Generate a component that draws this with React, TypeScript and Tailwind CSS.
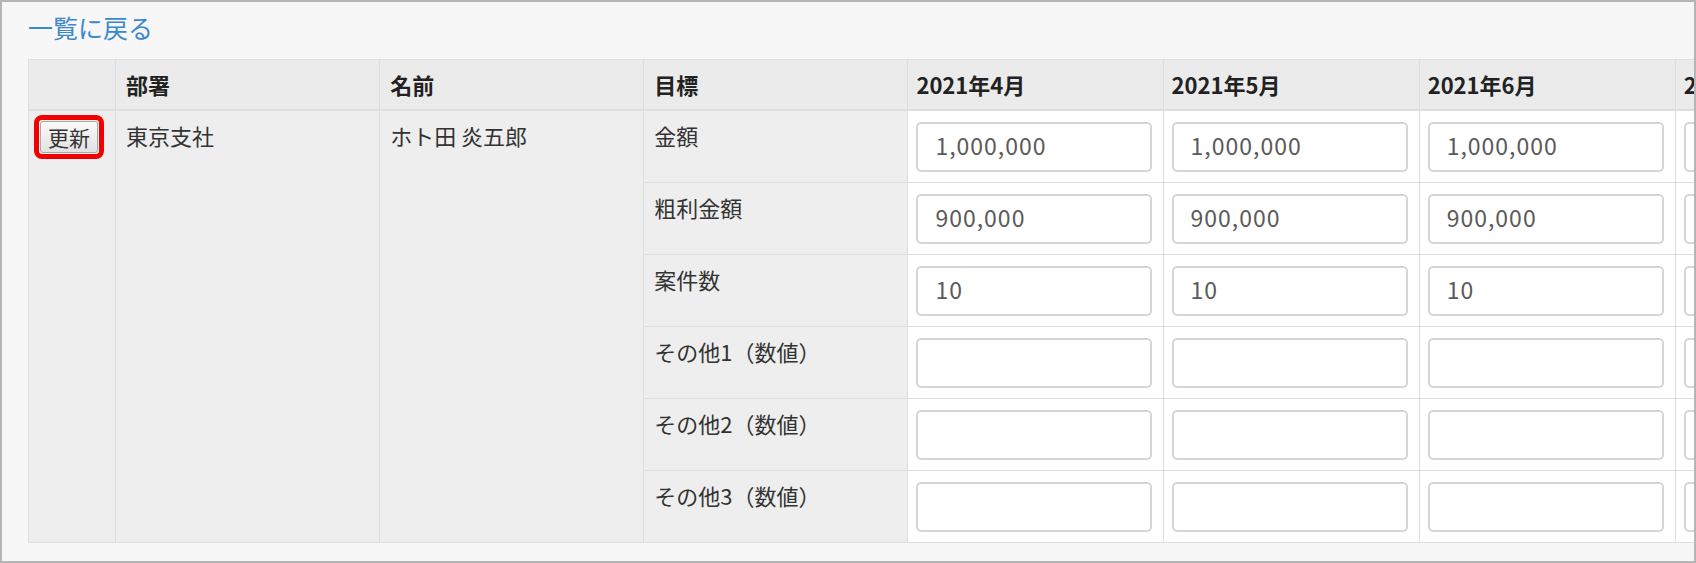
import React from 'react';

const months = ['2021年4月', '2021年5月', '2021年6月', '2021年7月'];

const targets = [
  { label: '金額', value: '1,000,000' },
  { label: '粗利金額', value: '900,000' },
  { label: '案件数', value: '10' },
  { label: 'その他1（数値）', value: '' },
  { label: 'その他2（数値）', value: '' },
  { label: 'その他3（数値）', value: '' },
];

const th = 'border border-[#dedede] border-b-2 bg-[#ebebeb] text-left align-top font-bold text-[#222] pt-[8px] pb-[9px] px-[10px] leading-[32px]';
const thMonth = 'border border-[#dedede] border-b-2 bg-[#ebebeb] text-left align-top font-bold text-[#222] pt-[8px] pb-[9px] pl-[8px] pr-[10px] leading-[32px] whitespace-nowrap';
const tdGray = 'border border-[#dedede] bg-[#eeeeee] align-top text-[#333] pt-[8px] px-[10px] leading-[32px]';
const tdInput = 'border border-[#dedede] bg-white align-top pt-[11px] pb-[10px] pl-[8px] pr-[9px]';

export default function App() {
  return (
    <div className="w-[1696px] h-[563px] overflow-hidden border-2 border-[#b5b5b5] bg-[#f7f7f7] font-['Noto_Sans_CJK_JP',sans-serif] text-[22px]">
      <div className="pl-[26px] pt-[9px] pb-[15px] leading-[32px]">
        <a href="#" className="text-[25px] text-[#3b88cc]">
          一覧に戻る
        </a>
      </div>
      <div className="pl-[26px]">
        <table className="table-fixed border-collapse w-[1904px]">
          <colgroup>
            <col className="w-[87px]" />
            <col className="w-[264px]" />
            <col className="w-[264px]" />
            <col className="w-[264px]" />
            <col className="w-[255px]" />
            <col className="w-[256px]" />
            <col className="w-[256px]" />
            <col className="w-[256px]" />
          </colgroup>
          <thead>
            <tr>
              <th className={th}></th>
              <th className={th}>部署</th>
              <th className={th}>名前</th>
              <th className={th}>目標</th>
              {months.map((m) => (
                <th key={m} className={thMonth}>
                  {m}
                </th>
              ))}
            </tr>
          </thead>
          <tbody>
            {targets.map((t, i) => (
              <tr key={t.label}>
                {i === 0 && (
                  <>
                    <td rowSpan={6} className="border border-[#dedede] bg-[#eeeeee] align-top pt-[4px] pl-[5px]">
                      <div className="inline-block rounded-[8px] border-[5px] border-[#f00000] p-px">
                        <button className="block h-[32px] w-[58px] rounded-[3px] border border-[#a9a9a9] bg-gradient-to-b from-[#fafafa] to-[#e2e2e2] text-[21px] leading-[28px] text-[#333]">
                          更新
                        </button>
                      </div>
                    </td>
                    <td rowSpan={6} className={tdGray}>
                      東京支社
                    </td>
                    <td rowSpan={6} className={tdGray}>
                      ホト田 炎五郎
                    </td>
                  </>
                )}
                <td className={tdGray}>{t.label}</td>
                {months.map((m) => (
                  <td key={m} className={tdInput}>
                    <input
                      readOnly
                      defaultValue={t.value}
                      className="block h-[50px] w-[236px] rounded-[5px] border-2 border-[#d6d6d6] bg-white pl-[17px] pr-[10px] pb-[5px] text-[23px] tracking-[1px] text-[#5a5a5a] outline-none"
                    />
                  </td>
                ))}
              </tr>
            ))}
          </tbody>
        </table>
      </div>
    </div>
  );
}
